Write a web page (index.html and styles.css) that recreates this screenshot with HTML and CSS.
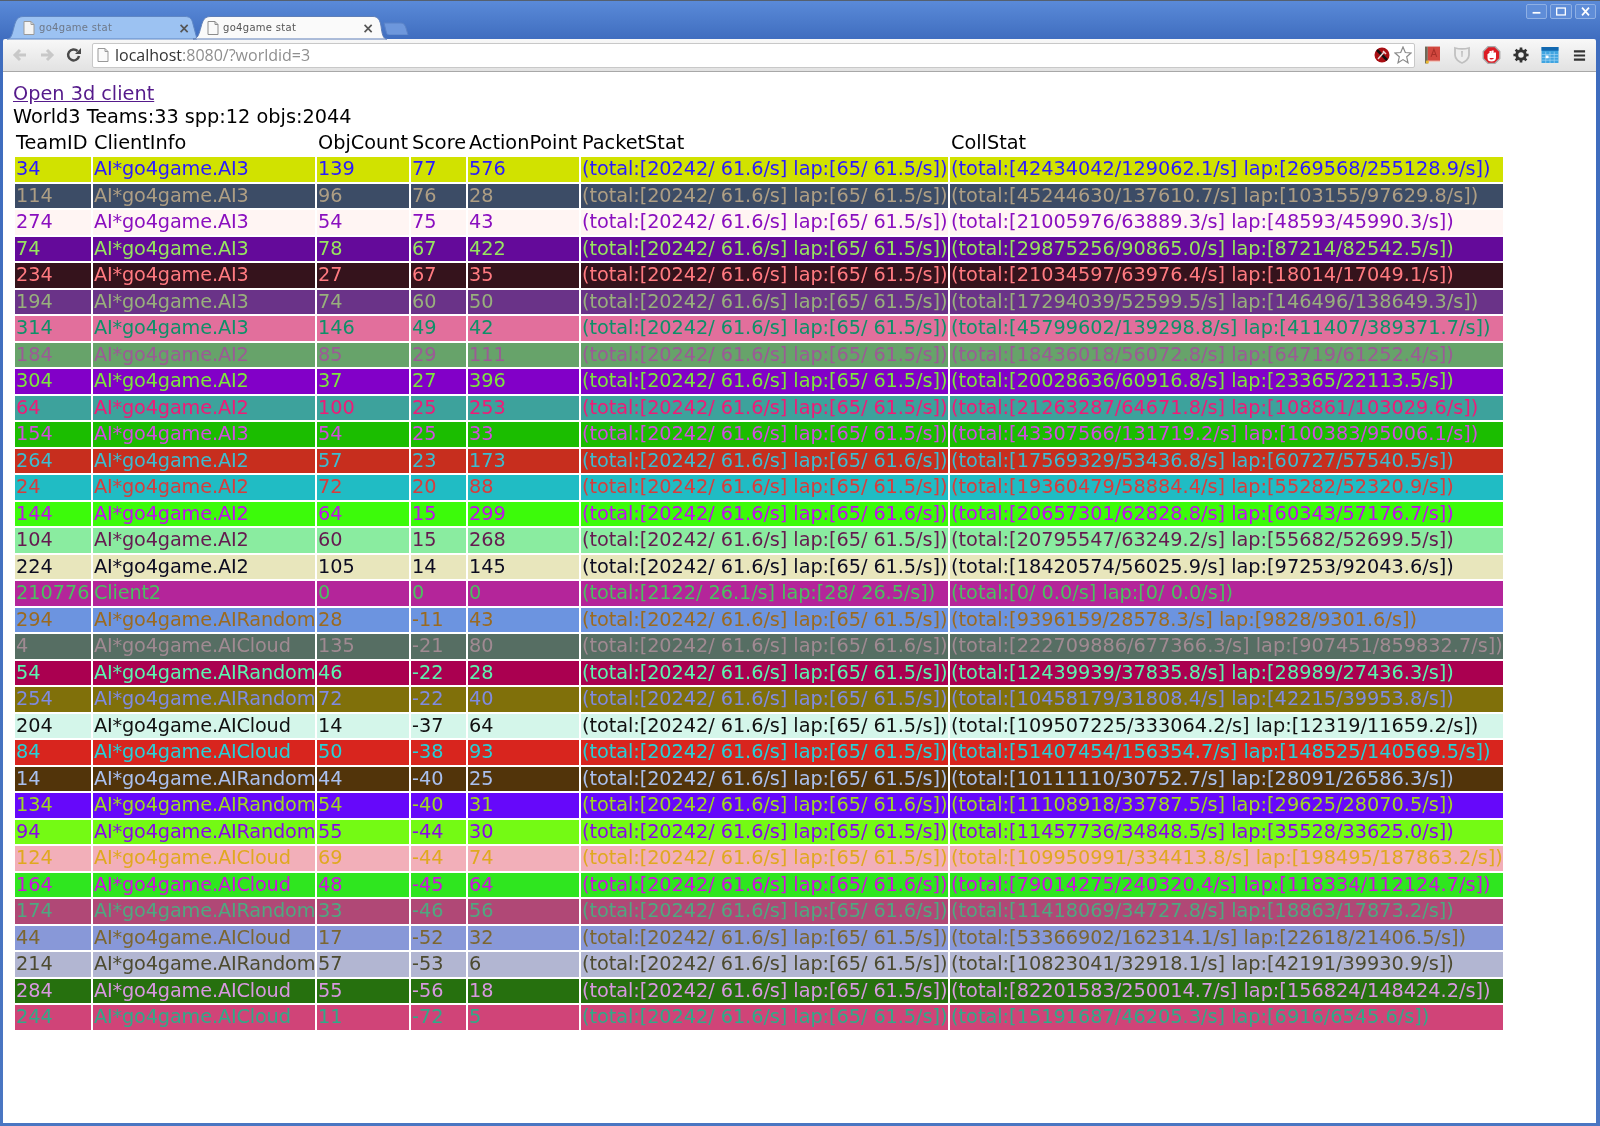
FILE: index.html
```html
<!DOCTYPE html>
<html lang="en">
<head>
<meta charset="utf-8">
<title>go4game stat</title>
<link rel="stylesheet" href="styles.css">
</head>
<body>
<div class="window">
  <header class="tabstrip">
    <div class="tab tab-back">
      <svg class="tab-shape" viewBox="0 0 190 23" preserveAspectRatio="none"><path d="M0 23C4 23 5 19 7 11 9 3 11 .5 17 .5H178C183 .5 185 3 186 8L190 23Z" fill="#9cc2f2" stroke="#5f86c4"/></svg>
      <svg class="tab-doc" viewBox="0 0 12 14"><path d="M1 .5H8L11 3.5V13.500H1Z" fill="#f4f4f4" stroke="#9a9a9a"/><path d="M8 .5V3.500H11" fill="none" stroke="#9a9a9a"/></svg>
      <span class="tab-title">go4game stat</span>
      <span class="tab-close">×</span>
    </div>
    <div class="tab tab-front">
      <svg class="tab-shape" viewBox="0 0 194 23" preserveAspectRatio="none"><path d="M0 23C5 23 6 18 8 11 10 3 12 .5 18 .5H180C185 .5 187 4 188 10 189 18 190 23 194 23Z" fill="#fafafa" stroke="#5f7fb8"/></svg>
      <svg class="tab-doc" viewBox="0 0 12 14"><path d="M1 .5H8L11 3.5V13.500H1Z" fill="#fafafa" stroke="#8c8c8c"/><path d="M8 .5V3.500H11" fill="none" stroke="#8c8c8c"/></svg>
      <span class="tab-title">go4game stat</span>
      <span class="tab-close">×</span>
    </div>
    <svg class="newtab" viewBox="0 0 26 13"><path d="M1 1H18C21 1 22 3 23 6L25 13H6C4 13 3.500 11 3 9Z" fill="#6d97dc" stroke="#5a82c6"/></svg>
    <div class="controls">
      <span class="ctl"><svg viewBox="0 0 21 15"><path d="M6 9H15" stroke="#fff" stroke-width="2"/></svg></span>
      <span class="ctl ctl-wide"><svg viewBox="0 0 21 15"><rect x="5.500" y="3.500" width="10" height="8" fill="none" stroke="#fff" stroke-width="1.500"/></svg></span>
      <span class="ctl"><svg viewBox="0 0 21 15"><path d="M6.500 3L14.500 12M14.500 3L6.500 12" stroke="#fff" stroke-width="2"/></svg></span>
    </div>
  </header>
  <nav class="toolbar">
    <svg class="navbtn" viewBox="0 0 16 16"><path d="M14 8H4M8 3L3 8L8 13" fill="none" stroke="#c8c8c8" stroke-width="3"/></svg>
    <svg class="navbtn" viewBox="0 0 16 16"><path d="M2 8H12M8 3L13 8L8 13" fill="none" stroke="#c8c8c8" stroke-width="3"/></svg>
    <svg class="navbtn reload" viewBox="0 0 16 16"><path d="M13 9A5.500 5.500 0 1 1 11.500 4" fill="none" stroke="#4a4a4a" stroke-width="2.500"/><path d="M9 7H15V1Z" fill="#4a4a4a"/></svg>
    <div class="omnibox">
      <svg class="omni-doc" viewBox="0 0 12 14"><path d="M1 .5H8L11 3.500V13.500H1Z" fill="#fafafa" stroke="#999"/><path d="M8 .5V3.500H11" fill="none" stroke="#999"/></svg>
      <span class="url"><span class="host">localhost</span>:8080/?worldid=3</span>
      <span class="omni-end">
        <svg class="ico" viewBox="0 0 16 16"><circle cx="8" cy="8" r="7.500" fill="#a80f14"/><path d="M3 3L13 13" stroke="#111" stroke-width="2.500"/><path d="M4 12L10 5M9 4L12 7" stroke="#f0d8d8" stroke-width="1.500"/></svg>
        <svg class="ico star" viewBox="0 0 18 18"><path d="M9 1L11.300 6.500 17 7 12.700 10.800 14 16.800 9 13.600 4 16.800 5.300 10.800 1 7 6.700 6.500Z" fill="#fff" stroke="#8a8a8a" stroke-width="1.200"/></svg>
      </span>
    </div>
    <div class="ext">
      <svg class="ico book" viewBox="0 0 16 18"><rect x="0" y="0" width="3" height="18" fill="#6e6a58"/><rect x="3" y="0" width="13" height="16" fill="#d2483f"/><rect x="3" y="15" width="13" height="1.500" fill="#f0c8c0"/><path d="M6.500 11L9.500 3L12.500 11M7.500 8.500H11.500" fill="none" stroke="#a83028" stroke-width="1.200"/><rect x="1" y="15" width="3" height="3" fill="#e8b830"/></svg>
      <svg class="ico shield" viewBox="0 0 16 18"><path d="M1 2C5 3 11 3 15 2V9C15 13 11 16 8 17 5 16 1 13 1 9Z" fill="#eee" stroke="#c0c0c0" stroke-width="1.800"/><path d="M7 5H9L8.600 11H7.400Z" fill="#c4c4c4"/></svg>
      <svg class="ico stop" viewBox="0 0 18 18"><path d="M5.500 .7H12.500L17.300 5.500V12.500L12.500 17.300H5.500L.7 12.500V5.500Z" fill="#dc1c24" stroke="#a8a8a8" stroke-width="1.300"/><path d="M6 8V12C6 13.500 7 14.500 9 14.500S12.500 13.500 12.500 11.500V6.500M8 8V5M10.200 8V4.500" fill="none" stroke="#fff" stroke-width="2"/><rect x="6" y="7" width="6.500" height="5" fill="#fff"/></svg>
      <svg class="ico gear" viewBox="0 0 18 18"><circle cx="9" cy="9" r="4.800" fill="none" stroke="#333" stroke-width="3.400"/><path d="M9 .5V3.500M9 14.500V17.500M.5 9H3.500M14.500 9H17.500M3 3L5 5M13 13L15 15M15 3L13 5M5 13L3 15" stroke="#333" stroke-width="3"/></svg>
      <svg class="ico cal" viewBox="0 0 18 17"><rect width="18" height="17" fill="#3fa4e0"/><rect width="18" height="4" fill="#1268b0"/><path d="M0 8H18M0 11H18M0 14H18M4.500 5V17M9 5V17M13.500 5V17" stroke="#a8d8f4" stroke-width=".7"/><rect x="4.500" y="9" width="3" height="3" fill="#fff"/></svg>
      <svg class="ico burger" viewBox="0 0 14 14"><path d="M1 2.500H13M1 7H13M1 11.500H13" stroke="#333" stroke-width="2.400"/></svg>
    </div>
  </nav>
  <main class="page">
    <a class="client" href="#">Open 3d client</a>
    <div class="summary">World3 Teams:33 spp:12 objs:2044</div>
    <table class="stats">
      <colgroup>
        <col class="c1"><col class="c2"><col class="c3"><col class="c4"><col class="c5"><col class="c6"><col class="c7">
      </colgroup>
      <thead>
        <tr><th>TeamID</th><th>ClientInfo</th><th>ObjCount</th><th>Score</th><th>ActionPoint</th><th>PacketStat</th><th>CollStat</th></tr>
      </thead>
      <tbody>
        <tr class="t34"><td>34</td><td>AI*go4game.AI3</td><td>139</td><td>77</td><td>576</td><td>(total:[20242/ 61.6/s] lap:[65/ 61.5/s])</td><td>(total:[42434042/129062.1/s] lap:[269568/255128.9/s])</td></tr>
        <tr class="t114"><td>114</td><td>AI*go4game.AI3</td><td>96</td><td>76</td><td>28</td><td>(total:[20242/ 61.6/s] lap:[65/ 61.5/s])</td><td>(total:[45244630/137610.7/s] lap:[103155/97629.8/s])</td></tr>
        <tr class="t274"><td>274</td><td>AI*go4game.AI3</td><td>54</td><td>75</td><td>43</td><td>(total:[20242/ 61.6/s] lap:[65/ 61.5/s])</td><td>(total:[21005976/63889.3/s] lap:[48593/45990.3/s])</td></tr>
        <tr class="t74"><td>74</td><td>AI*go4game.AI3</td><td>78</td><td>67</td><td>422</td><td>(total:[20242/ 61.6/s] lap:[65/ 61.5/s])</td><td>(total:[29875256/90865.0/s] lap:[87214/82542.5/s])</td></tr>
        <tr class="t234"><td>234</td><td>AI*go4game.AI3</td><td>27</td><td>67</td><td>35</td><td>(total:[20242/ 61.6/s] lap:[65/ 61.5/s])</td><td>(total:[21034597/63976.4/s] lap:[18014/17049.1/s])</td></tr>
        <tr class="t194"><td>194</td><td>AI*go4game.AI3</td><td>74</td><td>60</td><td>50</td><td>(total:[20242/ 61.6/s] lap:[65/ 61.5/s])</td><td>(total:[17294039/52599.5/s] lap:[146496/138649.3/s])</td></tr>
        <tr class="t314"><td>314</td><td>AI*go4game.AI3</td><td>146</td><td>49</td><td>42</td><td>(total:[20242/ 61.6/s] lap:[65/ 61.5/s])</td><td>(total:[45799602/139298.8/s] lap:[411407/389371.7/s])</td></tr>
        <tr class="t184"><td>184</td><td>AI*go4game.AI2</td><td>85</td><td>29</td><td>111</td><td>(total:[20242/ 61.6/s] lap:[65/ 61.5/s])</td><td>(total:[18436018/56072.8/s] lap:[64719/61252.4/s])</td></tr>
        <tr class="t304"><td>304</td><td>AI*go4game.AI2</td><td>37</td><td>27</td><td>396</td><td>(total:[20242/ 61.6/s] lap:[65/ 61.5/s])</td><td>(total:[20028636/60916.8/s] lap:[23365/22113.5/s])</td></tr>
        <tr class="t64"><td>64</td><td>AI*go4game.AI2</td><td>100</td><td>25</td><td>253</td><td>(total:[20242/ 61.6/s] lap:[65/ 61.5/s])</td><td>(total:[21263287/64671.8/s] lap:[108861/103029.6/s])</td></tr>
        <tr class="t154"><td>154</td><td>AI*go4game.AI3</td><td>54</td><td>25</td><td>33</td><td>(total:[20242/ 61.6/s] lap:[65/ 61.5/s])</td><td>(total:[43307566/131719.2/s] lap:[100383/95006.1/s])</td></tr>
        <tr class="t264"><td>264</td><td>AI*go4game.AI2</td><td>57</td><td>23</td><td>173</td><td>(total:[20242/ 61.6/s] lap:[65/ 61.6/s])</td><td>(total:[17569329/53436.8/s] lap:[60727/57540.5/s])</td></tr>
        <tr class="t24"><td>24</td><td>AI*go4game.AI2</td><td>72</td><td>20</td><td>88</td><td>(total:[20242/ 61.6/s] lap:[65/ 61.5/s])</td><td>(total:[19360479/58884.4/s] lap:[55282/52320.9/s])</td></tr>
        <tr class="t144"><td>144</td><td>AI*go4game.AI2</td><td>64</td><td>15</td><td>299</td><td>(total:[20242/ 61.6/s] lap:[65/ 61.6/s])</td><td>(total:[20657301/62828.8/s] lap:[60343/57176.7/s])</td></tr>
        <tr class="t104"><td>104</td><td>AI*go4game.AI2</td><td>60</td><td>15</td><td>268</td><td>(total:[20242/ 61.6/s] lap:[65/ 61.5/s])</td><td>(total:[20795547/63249.2/s] lap:[55682/52699.5/s])</td></tr>
        <tr class="t224"><td>224</td><td>AI*go4game.AI2</td><td>105</td><td>14</td><td>145</td><td>(total:[20242/ 61.6/s] lap:[65/ 61.5/s])</td><td>(total:[18420574/56025.9/s] lap:[97253/92043.6/s])</td></tr>
        <tr class="t210776"><td>210776</td><td>Client2</td><td>0</td><td>0</td><td>0</td><td>(total:[2122/ 26.1/s] lap:[28/ 26.5/s])</td><td>(total:[0/ 0.0/s] lap:[0/ 0.0/s])</td></tr>
        <tr class="t294"><td>294</td><td>AI*go4game.AIRandom</td><td>28</td><td>-11</td><td>43</td><td>(total:[20242/ 61.6/s] lap:[65/ 61.5/s])</td><td>(total:[9396159/28578.3/s] lap:[9828/9301.6/s])</td></tr>
        <tr class="t4"><td>4</td><td>AI*go4game.AICloud</td><td>135</td><td>-21</td><td>80</td><td>(total:[20242/ 61.6/s] lap:[65/ 61.6/s])</td><td>(total:[222709886/677366.3/s] lap:[907451/859832.7/s])</td></tr>
        <tr class="t54"><td>54</td><td>AI*go4game.AIRandom</td><td>46</td><td>-22</td><td>28</td><td>(total:[20242/ 61.6/s] lap:[65/ 61.5/s])</td><td>(total:[12439939/37835.8/s] lap:[28989/27436.3/s])</td></tr>
        <tr class="t254"><td>254</td><td>AI*go4game.AIRandom</td><td>72</td><td>-22</td><td>40</td><td>(total:[20242/ 61.6/s] lap:[65/ 61.5/s])</td><td>(total:[10458179/31808.4/s] lap:[42215/39953.8/s])</td></tr>
        <tr class="t204"><td>204</td><td>AI*go4game.AICloud</td><td>14</td><td>-37</td><td>64</td><td>(total:[20242/ 61.6/s] lap:[65/ 61.5/s])</td><td>(total:[109507225/333064.2/s] lap:[12319/11659.2/s])</td></tr>
        <tr class="t84"><td>84</td><td>AI*go4game.AICloud</td><td>50</td><td>-38</td><td>93</td><td>(total:[20242/ 61.6/s] lap:[65/ 61.5/s])</td><td>(total:[51407454/156354.7/s] lap:[148525/140569.5/s])</td></tr>
        <tr class="t14"><td>14</td><td>AI*go4game.AIRandom</td><td>44</td><td>-40</td><td>25</td><td>(total:[20242/ 61.6/s] lap:[65/ 61.5/s])</td><td>(total:[10111110/30752.7/s] lap:[28091/26586.3/s])</td></tr>
        <tr class="t134"><td>134</td><td>AI*go4game.AIRandom</td><td>54</td><td>-40</td><td>31</td><td>(total:[20242/ 61.6/s] lap:[65/ 61.6/s])</td><td>(total:[11108918/33787.5/s] lap:[29625/28070.5/s])</td></tr>
        <tr class="t94"><td>94</td><td>AI*go4game.AIRandom</td><td>55</td><td>-44</td><td>30</td><td>(total:[20242/ 61.6/s] lap:[65/ 61.5/s])</td><td>(total:[11457736/34848.5/s] lap:[35528/33625.0/s])</td></tr>
        <tr class="t124"><td>124</td><td>AI*go4game.AICloud</td><td>69</td><td>-44</td><td>74</td><td>(total:[20242/ 61.6/s] lap:[65/ 61.5/s])</td><td>(total:[109950991/334413.8/s] lap:[198495/187863.2/s])</td></tr>
        <tr class="t164"><td>164</td><td>AI*go4game.AICloud</td><td>48</td><td>-45</td><td>64</td><td>(total:[20242/ 61.6/s] lap:[65/ 61.6/s])</td><td>(total:[79014275/240320.4/s] lap:[118334/112124.7/s])</td></tr>
        <tr class="t174"><td>174</td><td>AI*go4game.AIRandom</td><td>33</td><td>-46</td><td>56</td><td>(total:[20242/ 61.6/s] lap:[65/ 61.6/s])</td><td>(total:[11418069/34727.8/s] lap:[18863/17873.2/s])</td></tr>
        <tr class="t44"><td>44</td><td>AI*go4game.AICloud</td><td>17</td><td>-52</td><td>32</td><td>(total:[20242/ 61.6/s] lap:[65/ 61.5/s])</td><td>(total:[53366902/162314.1/s] lap:[22618/21406.5/s])</td></tr>
        <tr class="t214"><td>214</td><td>AI*go4game.AIRandom</td><td>57</td><td>-53</td><td>6</td><td>(total:[20242/ 61.6/s] lap:[65/ 61.5/s])</td><td>(total:[10823041/32918.1/s] lap:[42191/39930.9/s])</td></tr>
        <tr class="t284"><td>284</td><td>AI*go4game.AICloud</td><td>55</td><td>-56</td><td>18</td><td>(total:[20242/ 61.6/s] lap:[65/ 61.5/s])</td><td>(total:[82201583/250014.7/s] lap:[156824/148424.2/s])</td></tr>
        <tr class="t244"><td>244</td><td>AI*go4game.AICloud</td><td>11</td><td>-72</td><td>5</td><td>(total:[20242/ 61.6/s] lap:[65/ 61.5/s])</td><td>(total:[15191687/46205.3/s] lap:[6916/6545.6/s])</td></tr>
      </tbody>
    </table>
  </main>
</div>
</body>
</html>
```
FILE: styles.css
```css
* { box-sizing: border-box; }
html, body { margin: 0; height: 100%; overflow: hidden; }
body { background: #fff; }
.window {
  height: 1126px;
  display: flex;
  flex-direction: column;
  padding: 0 4px 3px 3px;
  background: linear-gradient(#5a8ad8 0, #3e6cbe 40px, #4a76c2 100%);
  border-top: 1px solid #55606e;
  font-family: "DejaVu Sans", sans-serif;
  filter: blur(.35px);
}
.tabstrip {
  height: 38px;
  flex: none;
  display: flex;
  align-items: flex-end;
  padding-left: 4px;
  position: relative;
}
.tab {
  position: relative;
  height: 23px;
  display: flex;
  align-items: center;
  gap: 4px;
  font-size: 10px;
  letter-spacing: .3px;
  color: #555;
}
.tab-shape { position: absolute; inset: 0; width: 100%; height: 100%; overflow: visible; }
.tab-back { width: 190px; padding: 0 7px 0 16px; color: #6e7888; }
.tab-front { margin-left: -4px; width: 194px; padding: 0 13px 0 14px; }
.tab-doc { position: relative; width: 12px; height: 14px; flex: none; }
.tab-title { position: relative; flex: 1; }
.tab-close { position: relative; font-size: 14px; font-weight: bold; color: #555; letter-spacing: 0; }
.newtab { width: 26px; height: 13px; margin: 0 0 4px -4px; flex: none; }
.controls {
  position: absolute;
  top: 3px;
  right: 0;
  display: flex;
  gap: 3px;
}
.ctl {
  width: 21px;
  height: 15px;
  display: block;
  border: 1px solid #8fb0e4;
  border-radius: 2px;
  background: #5f8dd8;
}
.ctl-wide { width: 22px; }
.ctl svg { display: block; width: 100%; height: 100%; }
.toolbar {
  height: 33px;
  flex: none;
  display: flex;
  align-items: center;
  padding: 0 0 0 9px;
  background: linear-gradient(#f8f8f8, #e2e2e2);
  border-bottom: 1px solid #a8a8a8;
  border-radius: 2px 2px 0 0;
}
.navbtn { width: 16px; height: 16px; flex: none; margin-right: 11px; }
.reload { margin-right: 10px; }
.omnibox {
  width: 1323px;
  height: 25px;
  flex: none;
  display: flex;
  align-items: center;
  padding: 0 2px 0 4px;
  background: #fff;
  border: 1px solid #c8c8c8;
  border-radius: 2px;
  font-family: "Open Sans", sans-serif;
  font-size: 16px;
}
.omni-doc { width: 12px; height: 14px; flex: none; margin-right: 6px; }
.url { flex: 1; color: #8f8f8f; }
.host { color: #333; }
.omni-end { display: flex; align-items: center; gap: 4px; }
.omni-end .ico { width: 16px; height: 16px; }
.omni-end .star { width: 18px; height: 18px; }
.ext { display: flex; align-items: center; gap: 12px; margin-left: 10px; }
.ext .ico { display: block; height: 18px; }
.ext .book { width: 15px; }
.ext .shield { width: 16px; margin-left: 2px; }
.ext .stop { width: 19px; }
.ext .gear { width: 16px; height: 16px; }
.ext .cal { width: 18px; height: 16px; }
.ext .burger { width: 13px; height: 13px; margin-left: 2px; }
.page {
  flex: 1;
  background: #fff;
  padding: 10px 10px;
  font-size: 19.300px;
  line-height: 23px;
  color: #000;
}
.client { color: #551a8b; display: inline-block; }
.stats {
  table-layout: fixed;
  width: 1492px;
  border-collapse: separate;
  border-spacing: 2px 2px;
  margin-top: 2px;
  white-space: nowrap;
}
.c1 { width: 76px; }
.c2 { width: 222px; }
.c3 { width: 92px; }
.c4 { width: 55px; }
.c5 { width: 111px; }
.c6 { width: 367px; }
.c7 { width: 553px; }
.stats th { font-weight: normal; text-align: left; padding: 0 1px; height: 23px; line-height: 21px; vertical-align: top; }
.stats td { padding: 0 1px; height: 24.500px; line-height: 24.500px; }
.stats td:nth-child(2) { letter-spacing: -.16px; }
.stats td:nth-child(6) { letter-spacing: -.06px; }

.t34 { background: #d1e200; color: #2a1aff; }
.t114 { background: #3c4c66; color: #ae9e84; }
.t274 { background: #fff5f3; color: #8a0fbf; }
.t74 { background: #640a9a; color: #97e55f; }
.t234 { background: #35131c; color: #ff7a80; }
.t194 { background: #6a3388; color: #98b07c; }
.t314 { background: #e26f9c; color: #0e9068; }
.t184 { background: #67a36a; color: #9c5a96; }
.t304 { background: #8200c8; color: #7de63c; }
.t64 { background: #3da29c; color: #f01a78; }
.t154 { background: #1bbd00; color: #d24de0; }
.t264 { background: #c72e1e; color: #3cbcd0; }
.t24 { background: #20bcc4; color: #d83c3c; }
.t144 { background: #3cfb0a; color: #c00fee; }
.t104 { background: #8aeca0; color: #651a50; }
.t224 { background: #e8e6bc; color: #0b0b20; }
.t210776 { background: #b4259a; color: #4cbf60; }
.t294 { background: #6c94e0; color: #9b6a20; }
.t4 { background: #566e63; color: #a08a92; }
.t54 { background: #aa0050; color: #5cf5b0; }
.t254 { background: #80700a; color: #7f8be0; }
.t204 { background: #d4f6ea; color: #101010; }
.t84 { background: #d8251e; color: #27d0d8; }
.t14 { background: #52340a; color: #aac0ee; }
.t134 { background: #6608fa; color: #a0d820; }
.t94 { background: #74fa14; color: #8a06ea; }
.t124 { background: #f2afb9; color: #e0a820; }
.t164 { background: #2fe61f; color: #d010e0; }
.t174 { background: #b04876; color: #4fa880; }
.t44 { background: #8898d8; color: #7c6630; }
.t214 { background: #b2b6d2; color: #4c4a30; }
.t284 { background: #26700e; color: #d898e0; }
.t244 { background: #d04478; color: #2fab88; }
```
